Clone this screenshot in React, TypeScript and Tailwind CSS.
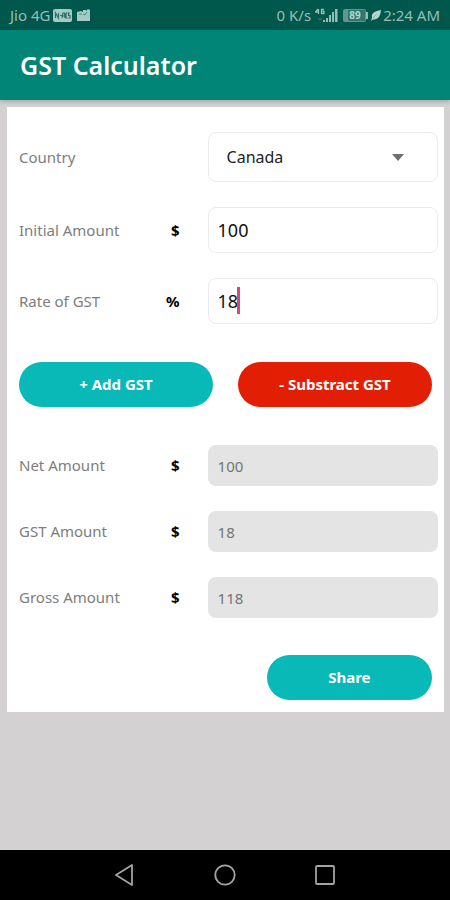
import { useState, type ReactNode } from "react";

const countries = ["Canada", "Australia", "India", "New Zealand", "Singapore"];

const inputClass =
  "block w-full rounded-lg border border-[#ebebeb] bg-white px-[9px] text-lg text-[#111] outline-none";

const StatusBar = () => (
  <div className="flex h-[30px] items-center justify-between bg-[#00574b] px-[10px] text-[15px] leading-5 text-[#93bfb8]">
    <div className="flex items-center">
      <span>Jio 4G</span>
      {/* VOLTE */}
      <svg className="ml-[3px]" width="19" height="13" viewBox="0 0 19 13">
        <rect width="19" height="13" rx="2" fill="#a5c9c3" />
        <path
          d="M2.500 9V4l3 5V4M7 6.500h2.500M9 9l1-5h1.500l.5 5M9.500 7h2.500M13 4v5h1.500M13 4h1.500M17 4h-1.500v2.500H17V9h-1.500"
          fill="none"
          stroke="#2c7168"
          strokeWidth="1.200"
        />
      </svg>
      <svg className="ml-[5px]" width="13" height="12" viewBox="0 0 13 12">
        <path d="M0 3l4-1 2 1V1h3v1l2-2 2 1v11H0z" fill="#a5c9c3" />
        <path d="M2 5h3M6 5l2 1 2-3" fill="none" stroke="#4d8b82" />
      </svg>
    </div>
    <div className="flex items-center">
      <span>0 K/s</span>
      {/* SIGNAL */}
      <svg className="ml-1" width="23" height="15" viewBox="0 0 23 15">
        <path
          d="M3 1L.5 4H4M3.500 1v5M9 1.500H6.500v4H9v-2H7.500"
          fill="none"
          stroke="#93bfb8"
          strokeWidth="1.300"
        />
        <path d="M3 10l2 2 2-2" fill="none" stroke="#3f8277" />
        <path
          d="M8 12h2v2H8zM11 10h2v4h-2zM14 7h2v7h-2zM17 4h2v10h-2zM20 1h2.500v13H20z"
          fill="#93bfb8"
        />
      </svg>
      {/* BATTERY */}
      <svg className="ml-[5px]" width="25" height="13" viewBox="0 0 25 13">
        <rect x=".5" y=".5" width="22" height="12" rx="1" fill="#2f766b" stroke="#5c988f" />
        <rect x="1" y="1" width="4" height="11" fill="#5c988f" />
        <text
          x="12"
          y="10"
          fontSize="10"
          fontWeight="700"
          textAnchor="middle"
          fill="#b5d5d0"
        >
          89
        </text>
        <path d="M23 3h2v7h-2z" fill="#93bfb8" />
      </svg>
      <svg className="ml-[3px] mr-0.5" width="10" height="11" viewBox="0 0 10 11">
        <path d="M10 0C4 1 0 3 1 7.500L0 11l2-1.500C7 10 9.500 6 10 0z" fill="#b5d5d0" />
        <path d="M2 8l3.500-3.500" stroke="#5c988f" strokeWidth=".6" />
      </svg>
      <span>2:24 AM</span>
    </div>
  </div>
);

type RowProps = {
  id: string;
  label: string;
  unit?: string;
  children: ReactNode;
};

const Row = ({ id, label, unit, children }: RowProps) => (
  <div className="flex items-center pl-3 pr-1.5">
    <label htmlFor={id} className="flex-1 whitespace-nowrap text-[15px] text-[#7d7d7d]">
      {label}
    </label>
    <span className="pr-7 text-[15px] font-bold text-black">{unit}</span>
    <div className="relative w-[55%]">{children}</div>
  </div>
);

const Result = ({ id, label, value }: { id: string; label: string; value: number }) => (
  <Row id={id} label={label} unit="$">
    <input
      id={id}
      readOnly
      value={value}
      className="block h-[41px] w-full rounded-lg bg-[#e4e4e4] px-[10px] text-[15px] text-[#747474] outline-none"
    />
  </Row>
);

const App = () => {
  const [country, setCountry] = useState("Canada");
  const [amount, setAmount] = useState("100");
  const [rate, setRate] = useState("18");
  const [result, setResult] = useState({ net: 100, gst: 18, gross: 118 });

  const round = (n: number) => Math.round(n * 100) / 100;

  const addGst = () => {
    const net = Number(amount);
    const gst = (net * Number(rate)) / 100;
    setResult({ net: round(net), gst: round(gst), gross: round(net + gst) });
  };

  const subtractGst = () => {
    const gross = Number(amount);
    const net = gross / (1 + Number(rate) / 100);
    setResult({ net: round(net), gst: round(gross - net), gross: round(gross) });
  };

  return (
    <div className="flex min-h-screen flex-col bg-[#d3d1d2] font-['Noto_Sans',sans-serif]">
      <StatusBar />

      {/* APP BAR */}
      <header className="flex h-[70px] items-center bg-[#008577] px-5 pt-0.5 shadow-[0_2px_4px_rgba(0,0,0,0.2)]">
        <h1 className="text-[25px] font-semibold text-white">GST Calculator</h1>
      </header>

      {/* FORM */}
      <main className="ml-[7px] mr-1.5 mt-[7px] flex-1">
        <div className="bg-white pb-3 pt-[25px]">
          <div className="flex flex-col gap-[25px]">
            <Row id="country" label="Country">
              <select
                id="country"
                value={country}
                onChange={(e) => setCountry(e.target.value)}
                className="block h-[50px] w-full appearance-none rounded-lg border border-[#ebebeb] bg-white px-[18px] text-base text-[#222] outline-none"
              >
                {countries.map((name) => (
                  <option key={name}>{name}</option>
                ))}
              </select>
              <svg
                className="pointer-events-none absolute right-[34px] top-[22px]"
                width="12"
                height="7"
                viewBox="0 0 12 7"
              >
                <path d="M0 0h12L6 7z" fill="#6f6f6f" />
              </svg>
            </Row>
            <Row id="amount" label="Initial Amount" unit="$">
              <input
                id="amount"
                inputMode="decimal"
                value={amount}
                onChange={(e) => setAmount(e.target.value)}
                className={`h-[46px] ${inputClass}`}
              />
            </Row>
            <Row id="rate" label="Rate of GST" unit="%">
              <input
                id="rate"
                inputMode="decimal"
                value={rate}
                onChange={(e) => setRate(e.target.value)}
                className={`h-[46px] caret-transparent ${inputClass}`}
              />
              <span
                className="pointer-events-none absolute top-[9px] h-[27px] w-[3px] bg-[#d8477c] text-lg"
                style={{ left: `calc(9px + ${rate.length}ch)` }}
              />
            </Row>
          </div>

          <div className="my-[38px] flex gap-[25px] px-3 text-[15px] font-bold text-white">
            <button onClick={addGst} className="h-[45px] flex-1 rounded-full bg-[#08b9b8]">
              + Add GST
            </button>
            <button onClick={subtractGst} className="h-[45px] flex-1 rounded-full bg-[#e21f04]">
              - Substract GST
            </button>
          </div>

          <div className="flex flex-col gap-[25px]">
            <Result id="net" label="Net Amount" value={result.net} />
            <Result id="gst" label="GST Amount" value={result.gst} />
            <Result id="gross" label="Gross Amount" value={result.gross} />
          </div>

          <div className="mt-[37px] flex justify-end px-3">
            <button className="h-[45px] w-2/5 rounded-full bg-[#08b9b8] text-[15px] font-bold text-white">
              Share
            </button>
          </div>
        </div>
      </main>

      {/* NAVIGATION */}
      <nav className="flex h-[50px] items-center justify-center gap-[78px] bg-black">
        <button aria-label="Back">
          <svg width="22" height="22" viewBox="0 0 22 22" fill="none" stroke="#a3a3a3" strokeWidth="1.800">
            <path d="M18 1v20L2 11z" strokeLinejoin="round" />
          </svg>
        </button>
        <button aria-label="Home">
          <svg width="22" height="22" viewBox="0 0 22 22" fill="none" stroke="#a3a3a3" strokeWidth="1.800">
            <circle cx="11" cy="11" r="9.700" />
          </svg>
        </button>
        <button aria-label="Recent apps">
          <svg width="22" height="22" viewBox="0 0 22 22" fill="none" stroke="#a3a3a3" strokeWidth="1.800">
            <rect x="2" y="2" width="18" height="18" rx="1" />
          </svg>
        </button>
      </nav>
    </div>
  );
};

export default App;
